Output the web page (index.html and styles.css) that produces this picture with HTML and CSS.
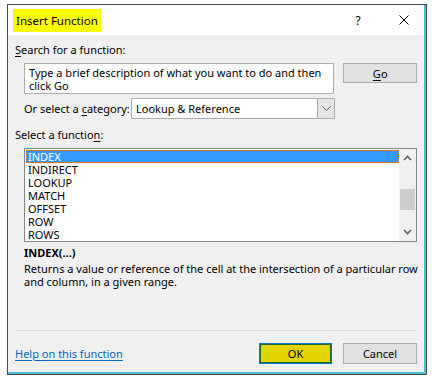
FILE: index.html
```html
<!DOCTYPE html>
<html lang="en">
<head>
  <meta charset="UTF-8" />
  <title>Insert Function</title>
  <link rel="stylesheet" href="styles.css">
</head>
<body>
  <div class="window">
    <div class="titlebar">
      <span class="title">Insert Function</span>
      <span class="help-btn">?</span>
      <span class="close-btn">
        <svg width="10" height="10" viewBox="0 0 10 10"><path d="M0.5 0.5 L9.5 9.5 M9.5 0.5 L0.5 9.5" stroke="#000" stroke-width="1" fill="none"/></svg>
      </span>
    </div>

    <div class="content">
      <div class="label"><u>S</u>earch for a function:</div>
      <div class="search-row">
        <div class="search-box">Type a brief description of what you want to do and then click Go</div>
        <div class="button go"><u>G</u>o</div>
      </div>

      <div class="category-row">
        <span class="cat-label">Or select a <u>c</u>ategory:</span>
        <div class="select">
          <span class="select-value">Lookup &amp; Reference</span>
          <span class="select-arrow">
            <svg width="9" height="5" viewBox="0 0 9 5"><path d="M0.5 0.5 L4.5 4.5 L8.5 0.5" stroke="#606060" fill="none"/></svg>
          </span>
        </div>
      </div>

      <div class="label fn-label">Select a functio<u>n</u>:</div>
      <div class="listbox">
        <ul class="items" id="items"></ul>
        <div class="scrollbar">
          <svg class="arrow" width="9" height="6" viewBox="0 0 9 6"><path d="M1 5 L4.5 1.5 L8 5" stroke="#606060" stroke-width="1.6" fill="none"/></svg>
          <div class="track"><div class="thumb"></div></div>
          <svg class="arrow" width="9" height="6" viewBox="0 0 9 6"><path d="M1 1 L4.5 4.5 L8 1" stroke="#606060" stroke-width="1.6" fill="none"/></svg>
        </div>
      </div>

      <div class="fn-name">INDEX(...)</div>
      <div class="fn-desc">Returns a value or reference of the cell at the intersection of a particular row<br>and column, in a given range.</div>

      <div class="separator"></div>

      <div class="footer">
        <span class="link">Help on this function</span>
        <div class="buttons">
          <div class="button ok">OK</div>
          <div class="button">Cancel</div>
        </div>
      </div>
    </div>
  </div>

  <script>
    const fonctions = ["INDEX", "INDIRECT", "LOOKUP", "MATCH", "OFFSET", "ROW", "ROWS"];
    const liste = document.getElementById("items");
    fonctions.forEach((f, i) => {
      liste.innerHTML += `<li class="${i === 0 ? 'selected' : ''}">${f}</li>`;
    });
  </script>
</body>
</html>
```

FILE: styles.css
```css
* {
  box-sizing: border-box;
}
body {
  margin: 0;
  padding: 4px 0 0 7px;
  background: #fff;
  font-family: 'Noto Sans', 'Open Sans', sans-serif;
  font-size: 11px;
  color: #000;
}
u {
  text-decoration: underline;
  text-underline-offset: 2px;
}
.window {
  width: 420px;
  height: 371px;
  border: 1px solid #4a4a4a;
  box-shadow: inset -2px -2px 0 #45c2d6;
  background: #f0f0f0;
  display: flex;
  flex-direction: column;
}
.titlebar {
  height: 30px;
  background: #fff;
  display: flex;
  align-items: center;
  padding: 0 0 0 5px;
  margin-right: 2px;
}
.title {
  background: #ffff00;
  padding: 0 3px;
  height: 23px;
  line-height: 23px;
  font-size: 11.5px;
}
.help-btn {
  margin-left: auto;
  font-size: 12px;
  width: 52px;
  text-align: center;
}
.close-btn {
  width: 40px;
  display: flex;
  justify-content: center;
}
.content {
  padding: 7px 7px 0 7px;
  margin-right: 2px;
  flex: 1;
  display: flex;
  flex-direction: column;
}
.label {
  line-height: 16px;
}
.search-row {
  display: flex;
  align-items: flex-start;
  margin-top: 5px;
  padding-left: 9px;
}
.search-box {
  width: 312px;
  height: 31px;
  background: #fff;
  border: 1px solid #adadad;
  padding: 2px 4px;
  line-height: 13px;
}
.button {
  width: 74px;
  height: 21px;
  background: #e1e1e1;
  border: 1px solid #adadad;
  display: flex;
  align-items: center;
  justify-content: center;
}
.go {
  margin-left: 9px;
  height: 20px;
}
.category-row {
  display: flex;
  align-items: center;
  margin-top: 4px;
  padding-left: 9px;
}
.cat-label {
  width: 107px;
  white-space: nowrap;
}
.select {
  width: 204px;
  height: 21px;
  background: #fff;
  border: 1px solid #adadad;
  display: flex;
  align-items: center;
}
.select-value {
  flex: 1;
  padding-left: 4px;
}
.select-arrow {
  width: 17px;
  height: 19px;
  background: #e5e5e5;
  border-left: 1px solid #adadad;
  display: flex;
  align-items: center;
  justify-content: center;
}
.fn-label {
  margin-top: 8px;
}
.listbox {
  margin: 5px 0 0 9px;
  height: 94px;
  background: #fff;
  border: 1px solid #828790;
  display: flex;
}
.items {
  list-style: none;
  margin: 0;
  padding: 1px 0 0 1px;
  flex: 1;
}
.items li {
  height: 13px;
  line-height: 13px;
  padding-left: 2px;
}
.items li.selected {
  background: #3399ff;
  color: #fff;
  outline: 1px dotted #e07a10;
  outline-offset: -1px;
}
.scrollbar {
  width: 17px;
  background: #f0f0f0;
  display: flex;
  flex-direction: column;
  align-items: center;
  padding: 6px 0;
}
.arrow {
  flex: none;
}
.track {
  flex: 1;
  width: 15px;
  position: relative;
}
.thumb {
  position: absolute;
  left: 0;
  right: 0;
  top: 28px;
  height: 21px;
  background: #cdcdcd;
}
.fn-name {
  margin: 3px 0 0 9px;
  font-weight: 700;
  line-height: 16px;
}
.fn-desc {
  margin: 1px 0 0 9px;
  line-height: 13px;
  white-space: nowrap;
}
.separator {
  margin-top: 42px;
  height: 1px;
  background: #dadada;
}
.footer {
  display: flex;
  align-items: center;
  margin-top: 12px;
}
.link {
  color: #0066cc;
  text-decoration: underline;
  text-underline-offset: 2px;
}
.buttons {
  margin-left: auto;
  display: flex;
  gap: 11px;
}
.button.ok {
  width: 73px;
  background: #e3d500;
  border: 1px solid #0078d7;
  box-shadow: inset 0 0 0 1px #1d6a2c;
}
```
